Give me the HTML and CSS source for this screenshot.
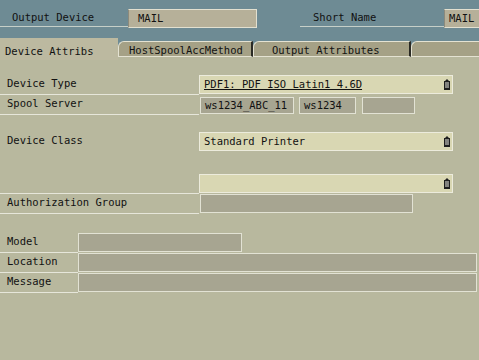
FILE: index.html
```html
<!DOCTYPE html>
<html lang="en">
<head>
  <meta charset="UTF-8">
  <title>Output Device</title>
  <link rel="stylesheet" href="styles.css">
</head>
<body>
  <div class="screen">
    <div class="header">
      <div class="head-label">Output Device</div>
      <div class="head-field">MAIL</div>
      <div class="head-label short">Short Name</div>
      <div class="head-field last">MAIL</div>
    </div>

    <div class="tabs">
      <div class="tab active">Device Attribs</div>
      <div class="tab t2">HostSpoolAccMethod</div>
      <div class="tab t3">Output Attributes</div>
      <div class="tab t4"></div>
    </div>

    <div class="panel">
      <div class="row first">
        <div class="label">Device Type</div>
        <div class="field combo"><span class="link">PDF1: PDF ISO Latin1 4.6D</span>
          <svg class="drop" viewBox="0 0 6 11"><path d="M0 2h6v9H0z" fill="#1e1e1e"/><path d="M1 2l2-2 2 2z" fill="#1e1e1e"/><path d="M1 4h4M1 6h4M1 8h4" stroke="#e8e8e0" stroke-width="1"/></svg>
        </div>
      </div>
      <div class="row">
        <div class="label">Spool Server</div>
        <div class="boxes">
          <div class="box w1">ws1234_ABC_11</div>
          <div class="box w2">ws1234</div>
          <div class="box w3"></div>
        </div>
      </div>

      <div class="row sp1">
        <div class="label plain">Device Class</div>
        <div class="field combo">Standard Printer
          <svg class="drop" viewBox="0 0 6 11"><path d="M0 2h6v9H0z" fill="#1e1e1e"/><path d="M1 2l2-2 2 2z" fill="#1e1e1e"/><path d="M1 4h4M1 6h4M1 8h4" stroke="#e8e8e0" stroke-width="1"/></svg>
        </div>
      </div>

      <div class="row sp2">
        <div class="label"></div>
        <div class="field combo">
          <svg class="drop" viewBox="0 0 6 11"><path d="M0 2h6v9H0z" fill="#1e1e1e"/><path d="M1 2l2-2 2 2z" fill="#1e1e1e"/><path d="M1 4h4M1 6h4M1 8h4" stroke="#e8e8e0" stroke-width="1"/></svg>
        </div>
      </div>
      <div class="row">
        <div class="label">Authorization Group</div>
        <div class="field grey auth"></div>
      </div>

      <div class="row sp3">
        <div class="label narrow">Model</div>
        <div class="field grey model"></div>
      </div>
      <div class="row">
        <div class="label narrow">Location</div>
        <div class="field grey wide"></div>
      </div>
      <div class="row">
        <div class="label narrow">Message</div>
        <div class="field grey wide"></div>
      </div>
    </div>
  </div>
</body>
</html>
```

FILE: styles.css
```css
body {
  margin: 0;
  background-color: #b8b89e;
}

.screen {
  width: 479px;
  height: 360px;
  overflow: hidden;
  font-family: "DejaVu Sans Mono", monospace;
  font-size: 10.5px;
  color: #111;
  background-color: #b8b89e;
}

/* header band */
.header {
  display: flex;
  align-items: flex-start;
  height: 37px;
  padding-top: 9px;
  box-sizing: border-box;
  background-color: #6e8b94;
  white-space: nowrap;
}

.header > div {
  flex-shrink: 0;
}

.head-label {
  width: 116px;
  height: 17px;
  line-height: 17px;
  padding-left: 12px;
  border-bottom: 1px solid #c6cfc8;
}

.head-label.short {
  width: 131px;
  margin-left: 43px;
  padding-left: 13px;
}

.head-field {
  width: 118px;
  height: 17px;
  line-height: 17px;
  padding-left: 9px;
  background-color: #b6b099;
  border: 1px solid #e2e0d0;
  border-left-color: #8c8a7c;
}

.head-field.last {
  width: 40px;
  padding-left: 4px;
}

/* tabs */
.tabs {
  display: flex;
  align-items: flex-end;
  height: 20px;
  background-color: #6e8b94;
  white-space: nowrap;
}

.tab {
  flex-shrink: 0;
  height: 16px;
  line-height: 16px;
  box-sizing: border-box;
  background-color: #a5a186;
  border-top: 1px solid #e4e2d2;
  border-left: 1px solid #e4e2d2;
  border-right: 2px solid #2a2a24;
  border-top-left-radius: 6px;
  border-bottom: 1px solid #e4e2d2;
}

.tab.active {
  width: 118px;
  height: 22px;
  margin-bottom: -3px;
  line-height: 24px;
  padding-left: 5px;
  background-color: #bcb9a0;
  border: none;
  border-top: 1px solid #bcb9a0;
  border-radius: 0;
}

.tab.t2 {
  width: 135px;
  padding-left: 10px;
}

.tab.t3 {
  width: 158px;
  padding-left: 18px;
}

.tab.t4 {
  flex: 1;
  border-right: none;
}

/* form panel */
.panel {
  padding-top: 18px;
}

.row {
  display: flex;
  height: 20px;
  white-space: nowrap;
}

.row > div {
  flex-shrink: 0;
}

.label {
  width: 192px;
  padding-left: 7px;
  line-height: 17px;
  border-bottom: 1px solid #e6e6da;
}

.label.plain {
  border-bottom-color: transparent;
}

.label.narrow {
  width: 71px;
}

.sp1 { margin-top: 17px; }
.sp2 { margin-top: 22px; }
.sp3 { margin-top: 19px; }

.field {
  box-sizing: border-box;
  height: 19px;
  line-height: 17px;
  padding-left: 4px;
  border: 1px solid #ecebdc;
}

.field.combo {
  display: flex;
  align-items: center;
  width: 254px;
  padding-right: 2px;
  background-color: #d9d7b3;
}

.link {
  text-decoration: underline;
}

.drop {
  width: 6px;
  height: 11px;
  margin-left: auto;
}

.field.grey {
  background-color: #a7a591;
  border-color: #e2e2d4;
}

.field.auth {
  width: 213px;
  margin-left: 1px;
}

.field.model {
  width: 164px;
}

.field.wide {
  width: 399px;
}

.boxes {
  display: flex;
  gap: 5px;
  padding-top: 2px;
  margin-left: 1px;
}

.box {
  box-sizing: border-box;
  height: 17px;
  line-height: 15px;
  padding-left: 4px;
  background-color: #a7a591;
  border: 1px solid #e2e2d4;
}

.box.w1 { width: 94px; }
.box.w2 { width: 57px; }
.box.w3 { width: 53px; margin-left: 1px; }
```
